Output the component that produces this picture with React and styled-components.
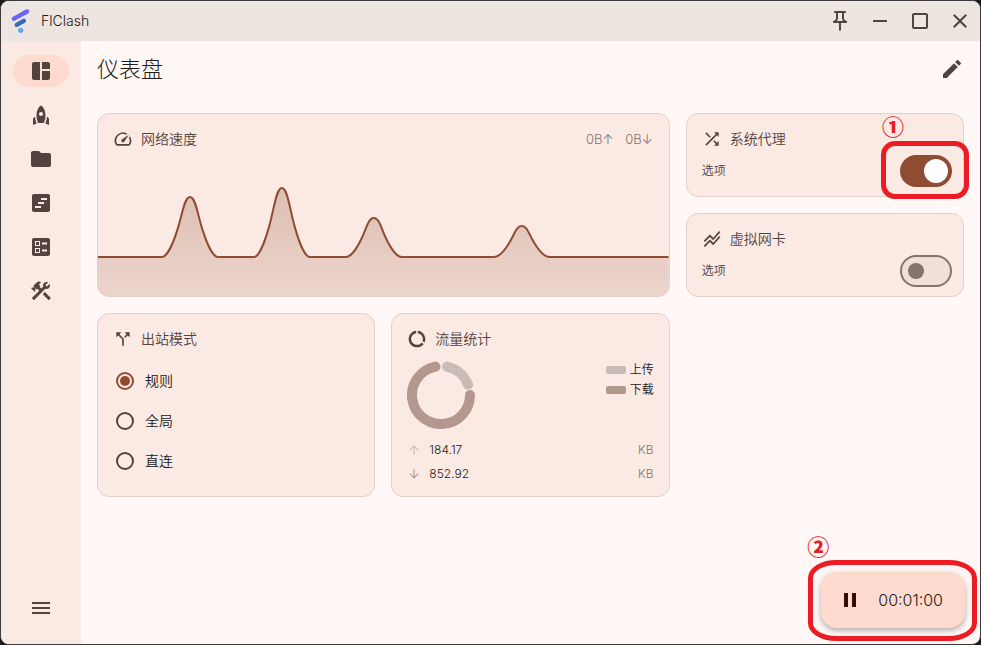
import React, { useState } from 'react';
import styled, { createGlobalStyle } from 'styled-components';
import {
    MdBallot,
    MdArrowDownward,
    MdArrowUpward,
    MdCallSplit,
    MdClose,
    MdConstruction,
    MdCropSquare,
    MdDataSaverOff,
    MdEdit,
    MdFolder,
    MdMenu,
    MdOutlinePushPin,
    MdPause,
    MdRemove,
    MdRocket,
    MdShuffle,
    MdSpaceDashboard,
    MdSpeed,
    MdStackedLineChart,
    MdViewTimeline,
} from 'react-icons/md';

const colors = {
    primary: '#8f4c33',
    surface: '#fff8f6',
    container: '#fbeae3',
    bar: '#ede5e0',
    accent: '#ffdbcf',
    text: '#231917',
    muted: '#53433f',
    outline: '#85736e',
    line: '#e3d0c9',
    upload: '#c9bbb5',
    download: '#b2988f',
    mark: '#ed1c24',
};

const GlobalStyle = createGlobalStyle`
    * {
        box-sizing: border-box;
    }

    body {
        margin: 0;
        background: #1c1a1b;
        color: ${colors.text};
        font-family: Inter, 'Noto Sans CJK SC', sans-serif;
        font-size: 14px;
        font-weight: 350;
        line-height: 20px;
    }

    button {
        padding: 0;
        border: 0;
        background: none;
        color: inherit;
        font: inherit;
        cursor: pointer;
    }

    svg {
        display: block;
    }
`;

const Window = styled.div`
    position: relative;
    display: flex;
    flex-direction: column;
    min-height: 100vh;
    border: 1px solid #3d3a3b;
    border-radius: 9px;
    background: ${colors.surface};
    overflow: hidden;
`;

const TitleBar = styled.header`
    display: flex;
    align-items: center;
    height: 40px;
    padding-left: 8px;
    background: ${colors.bar};
`;

const AppName = styled.span`
    flex: 1;
    margin-left: 8px;
`;

const WindowButton = styled.button`
    display: grid;
    place-items: center;
    width: 40px;
    height: 40px;
    color: ${colors.muted};
    font-size: 24px;
`;

const Body = styled.div`
    display: flex;
    flex: 1;
`;

const Sidebar = styled.nav`
    display: flex;
    flex-direction: column;
    align-items: center;
    gap: 12px;
    width: 80px;
    padding: 14px 0 20px;
    background: ${colors.container};
`;

const NavButton = styled.button`
    display: grid;
    place-items: center;
    width: 56px;
    height: 32px;
    border-radius: 16px;
    background: ${({ $active }) => ($active ? colors.accent : 'transparent')};
    color: ${colors.muted};
    font-size: 24px;
`;

const MenuButton = styled(NavButton)`
    margin-top: auto;
`;

const Main = styled.main`
    flex: 1;
    min-width: 0;
    padding: 0 16px 16px;
`;

const PageHeader = styled.div`
    display: flex;
    align-items: center;
    justify-content: space-between;
    height: 56px;
    margin-bottom: 16px;
`;

const PageTitle = styled.h1`
    margin: 0;
    font-size: 22px;
    font-weight: 300;
    line-height: 28px;
`;

const EditButton = styled.button`
    color: ${colors.muted};
    font-size: 24px;
`;

const Grid = styled.div`
    display: grid;
    grid-template-columns: repeat(3, minmax(0, 1fr));
    grid-auto-rows: minmax(84px, auto);
    gap: 16px;
`;

const Card = styled.section`
    display: flex;
    flex-direction: column;
    grid-column: span ${({ $cols }) => $cols || 1};
    grid-row: span ${({ $rows }) => $rows || 1};
    border: 1px solid ${colors.line};
    border-radius: 12px;
    background: ${colors.container};
`;

const CardHeader = styled.div`
    display: flex;
    align-items: center;
    gap: 8px;
    padding: 15px 16px 0 15px;
    color: ${colors.muted};

    svg {
        font-size: 20px;
    }
`;

const CardTitle = styled.h2`
    flex: 1;
    margin: 0;
    font-size: 14px;
    font-weight: 350;
    line-height: 20px;
`;

const Speeds = styled.div`
    display: flex;
    gap: 12px;
    color: ${colors.outline};
    font-size: 13px;
`;

const Chart = styled.svg`
    flex: 1;
    width: 100%;
    min-height: 0;
    border-radius: 0 0 11px 11px;
`;

const OptionRow = styled.label`
    display: flex;
    align-items: center;
    justify-content: space-between;
    margin-top: 6px;
    padding: 0 11px 0 15px;
    color: ${colors.muted};
    font-size: 12px;
`;

const SwitchBox = styled.span`
    position: relative;
    display: flex;
`;

const Switch = styled.input`
    display: flex;
    align-items: center;
    appearance: none;
    width: 52px;
    height: 32px;
    margin: 0;
    padding: 0 6px;
    border: 2px solid ${colors.outline};
    border-radius: 16px;
    background: #f1dfd9;
    cursor: pointer;

    &::before {
        content: '';
        width: 16px;
        height: 16px;
        border-radius: 50%;
        background: ${colors.outline};
    }

    &:checked {
        justify-content: flex-end;
        padding: 0 2px;
        border-color: ${colors.primary};
        background: ${colors.primary};
    }

    &:checked::before {
        width: 24px;
        height: 24px;
        background: #fff;
    }
`;

const ModeList = styled.div`
    display: flex;
    flex-direction: column;
    padding: 12px 18px 15px;
`;

const ModeLabel = styled.label`
    display: flex;
    align-items: center;
    gap: 11px;
    height: 40px;
    cursor: pointer;
`;

const Radio = styled.input`
    display: grid;
    place-items: center;
    appearance: none;
    width: 18px;
    height: 18px;
    margin: 0;
    border: 2px solid ${colors.muted};
    border-radius: 50%;

    &:checked {
        border-color: ${colors.primary};
    }

    &:checked::before {
        content: '';
        width: 10px;
        height: 10px;
        border-radius: 50%;
        background: ${colors.primary};
    }
`;

const Traffic = styled.div`
    display: flex;
    justify-content: space-between;
    padding: 12px 15px 9px;
`;

const Legend = styled.ul`
    margin: 0;
    padding: 1px 0 0;
    list-style: none;
    font-size: 12px;
    line-height: 16px;
`;

const LegendItem = styled.li`
    display: flex;
    align-items: center;
    gap: 4px;
    margin-bottom: 4px;

    &::before {
        content: '';
        width: 20px;
        height: 8px;
        border-radius: 2px;
        background: ${({ $color }) => $color};
    }
`;

const TotalRow = styled.div`
    display: flex;
    align-items: center;
    gap: 8px;
    height: 24px;
    padding: 0 15px;
    font-size: 12px;

    svg {
        color: ${({ $color }) => $color};
        font-size: 14px;
    }
`;

const Unit = styled.span`
    margin-left: auto;
    color: ${colors.outline};
`;

const FabArea = styled.div`
    position: absolute;
    right: 15px;
    bottom: 16px;
`;

const Fab = styled.button`
    display: flex;
    align-items: center;
    gap: 16px;
    height: 56px;
    padding: 0 22px 0 17px;
    border-radius: 16px;
    background: ${colors.accent};
    box-shadow: 0 3px 5px rgba(0, 0, 0, 0.22), 0 1px 10px rgba(0, 0, 0, 0.1);
    font-size: 16px;

    svg {
        color: #380d00;
        font-size: 24px;
    }
`;

const Mark = styled.span`
    position: absolute;
    inset: ${({ $inset }) => $inset};
    border: 5px solid ${colors.mark};
    border-radius: ${({ $radius }) => $radius};
    pointer-events: none;
`;

const MarkNumber = styled.span`
    position: absolute;
    top: ${({ $top }) => $top};
    left: ${({ $left }) => $left};
    color: ${colors.mark};
    font-family: 'Noto Sans CJK SC', sans-serif;
    font-size: 22px;
    font-weight: 900;
    line-height: 24px;
`;

const navItems = [
    { label: '仪表盘', icon: MdSpaceDashboard },
    { label: '代理', icon: MdRocket },
    { label: '配置', icon: MdFolder },
    { label: '请求', icon: MdViewTimeline },
    { label: '连接', icon: MdBallot },
    { label: '工具', icon: MdConstruction },
];

const modes = ['规则', '全局', '直连'];

const BASELINE = 108;

const peaks = [
    { x: 92, height: 60 },
    { x: 184, height: 69 },
    { x: 276, height: 39 },
    { x: 424, height: 31 },
];

const peakPath = ({ x, height }) => {
    const y = (part) => BASELINE - height * part;
    return [
        `L${x - 28} ${y(0)}`,
        `C${x - 22} ${y(0)} ${x - 15} ${y(0.31)} ${x - 11} ${y(0.54)}`,
        `C${x - 7} ${y(0.78)} ${x - 5} ${y(1)} ${x} ${y(1)}`,
        `C${x + 5} ${y(1)} ${x + 7} ${y(0.78)} ${x + 11} ${y(0.54)}`,
        `C${x + 15} ${y(0.31)} ${x + 22} ${y(0)} ${x + 28} ${y(0)}`,
    ].join(' ');
};

const linePath = `M0 ${BASELINE} ${peaks.map(peakPath).join(' ')} L571 ${BASELINE}`;

const Logo = () => (
    <svg width="24" height="24" viewBox="0 0 24 24" fill="none" strokeWidth="4.4" strokeLinecap="round">
        <path d="M5 9.6 17.6 2.8" stroke="#6666fb" />
        <path d="M16 1.2q1-.4 2-.4h2.4l-.5 1.8q-.3 1-1.3 1.6Z" fill="#6666fb" />
        <path d="M7.8 15.8 14.8 11.8" stroke="#336ab6" />
        <circle cx="11.7" cy="21.3" r="2.6" fill="#5ca8e9" />
    </svg>
);

const SpeedChart = () => (
    <Chart viewBox="0 0 571 147" preserveAspectRatio="none">
        <defs>
            <linearGradient id="speedFill" x1="0" y1="0" x2="0" y2="1">
                <stop offset="0" stopColor={colors.primary} stopOpacity="0.28" />
                <stop offset="1" stopColor={colors.primary} stopOpacity="0.13" />
            </linearGradient>
        </defs>
        <path d={`${linePath} V147 H0 Z`} fill="url(#speedFill)" />
        <path d={linePath} fill="none" stroke={colors.primary} strokeWidth="2" />
    </Chart>
);

const Donut = () => (
    <svg width="68" height="68" viewBox="0 0 68 68" fill="none" strokeWidth="10" strokeLinecap="round">
        <path d="M40 5.6A29 29 0 0 1 61 23.6" stroke={colors.upload} />
        <path d="M63 34A29 29 0 1 1 28.5 5.6" stroke={colors.download} />
    </svg>
);

const OptionCard = ({ icon: Icon, title, defaultChecked, children }) => (
    <Card>
        <CardHeader>
            <Icon />
            <CardTitle>{title}</CardTitle>
        </CardHeader>
        <OptionRow>
            选项
            <SwitchBox>
                <Switch type="checkbox" role="switch" aria-label={title} defaultChecked={defaultChecked} />
                {children}
            </SwitchBox>
        </OptionRow>
    </Card>
);

const App = () => {
    const [page, setPage] = useState('仪表盘');
    const [mode, setMode] = useState('规则');

    return (
        <>
            <GlobalStyle />
            <Window>
                <TitleBar>
                    <Logo />
                    <AppName>FlClash</AppName>
                    <WindowButton aria-label="置顶"><MdOutlinePushPin /></WindowButton>
                    <WindowButton aria-label="最小化"><MdRemove /></WindowButton>
                    <WindowButton aria-label="最大化"><MdCropSquare /></WindowButton>
                    <WindowButton aria-label="关闭"><MdClose /></WindowButton>
                </TitleBar>
                <Body>
                    <Sidebar>
                        {navItems.map(({ label, icon: Icon }) => (
                            <NavButton
                                key={label}
                                aria-label={label}
                                $active={page === label}
                                onClick={() => setPage(label)}
                            >
                                <Icon />
                            </NavButton>
                        ))}
                        <MenuButton aria-label="菜单"><MdMenu /></MenuButton>
                    </Sidebar>
                    <Main>
                        <PageHeader>
                            <PageTitle>仪表盘</PageTitle>
                            <EditButton aria-label="编辑"><MdEdit /></EditButton>
                        </PageHeader>
                        <Grid>
                            <Card $cols={2} $rows={2}>
                                <CardHeader>
                                    <MdSpeed />
                                    <CardTitle>网络速度</CardTitle>
                                    <Speeds>
                                        <span>0B↑</span>
                                        <span>0B↓</span>
                                    </Speeds>
                                </CardHeader>
                                <SpeedChart />
                            </Card>
                            <OptionCard icon={MdShuffle} title="系统代理" defaultChecked>
                                <Mark $inset="-14px -17px -12px -19px" $radius="14px" />
                                <MarkNumber $top="-42px" $left="-18px">①</MarkNumber>
                            </OptionCard>
                            <OptionCard icon={MdStackedLineChart} title="虚拟网卡" />
                            <Card $rows={2}>
                                <CardHeader>
                                    <MdCallSplit />
                                    <CardTitle>出站模式</CardTitle>
                                </CardHeader>
                                <ModeList>
                                    {modes.map((name) => (
                                        <ModeLabel key={name}>
                                            <Radio
                                                type="radio"
                                                name="mode"
                                                checked={mode === name}
                                                onChange={() => setMode(name)}
                                            />
                                            {name}
                                        </ModeLabel>
                                    ))}
                                </ModeList>
                            </Card>
                            <Card $rows={2}>
                                <CardHeader>
                                    <MdDataSaverOff />
                                    <CardTitle>流量统计</CardTitle>
                                </CardHeader>
                                <Traffic>
                                    <Donut />
                                    <Legend>
                                        <LegendItem $color={colors.upload}>上传</LegendItem>
                                        <LegendItem $color={colors.download}>下载</LegendItem>
                                    </Legend>
                                </Traffic>
                                <TotalRow $color={colors.upload}>
                                    <MdArrowUpward />
                                    184.17
                                    <Unit>KB</Unit>
                                </TotalRow>
                                <TotalRow $color={colors.download}>
                                    <MdArrowDownward />
                                    852.92
                                    <Unit>KB</Unit>
                                </TotalRow>
                            </Card>
                        </Grid>
                    </Main>
                </Body>
                <FabArea>
                    <Fab>
                        <MdPause />
                        00:01:00
                    </Fab>
                    <Mark $inset="-12px -12px -13px -13px" $radius="28px / 18px" />
                    <MarkNumber $top="-39px" $left="-14px">②</MarkNumber>
                </FabArea>
            </Window>
        </>
    );
};

export default App;
